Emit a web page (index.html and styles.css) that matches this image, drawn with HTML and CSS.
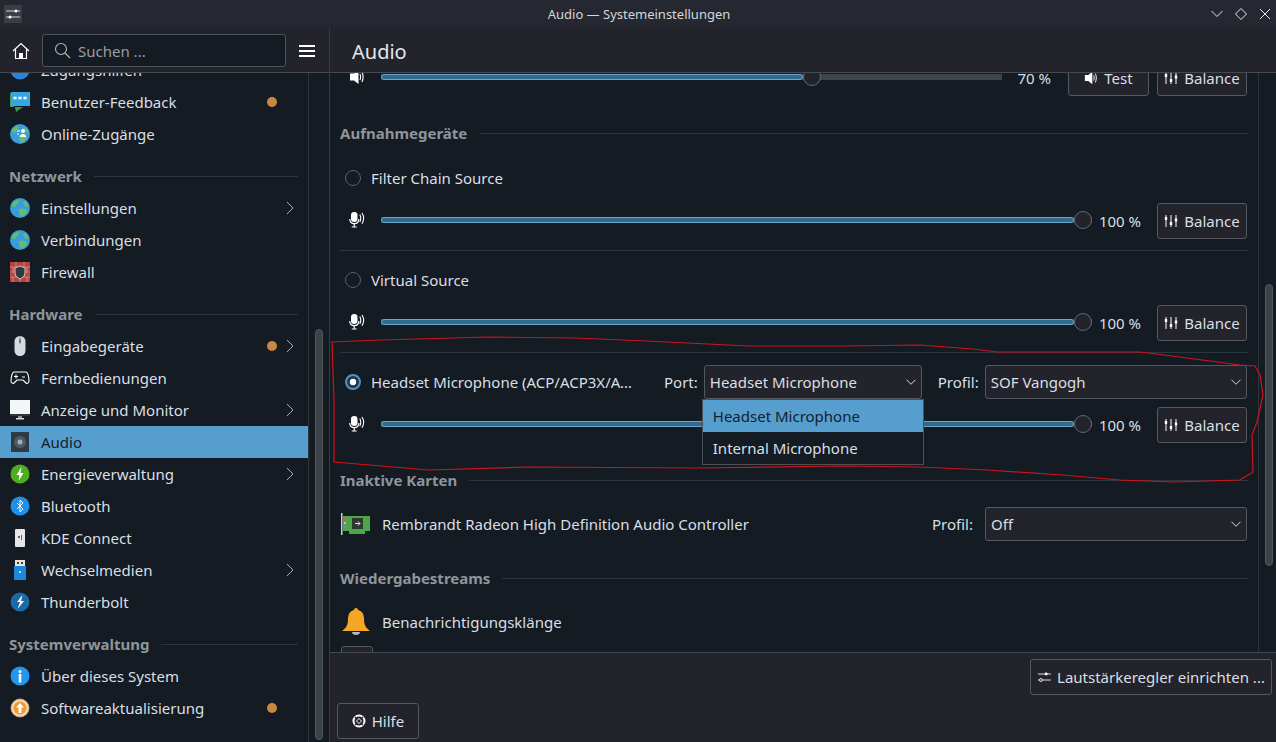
FILE: index.html
```html
<!DOCTYPE html>
<html lang="de">
<head>
    <meta charset="UTF-8">
    <title>Audio — Systemeinstellungen</title>
    <link rel="stylesheet" href="styles.css">
</head>
<body>

<svg class="defs" width="0" height="0">
    <symbol id="chev" viewBox="0 0 10 16"><path d="M2 2l6 6-6 6" fill="none" stroke="#a9aeb3" stroke-width="1"/></symbol>
    <symbol id="chev-down" viewBox="0 0 16 10"><path d="M2 2l6 6 6-6" fill="none" stroke="#d8dde2" stroke-width="1.300"/></symbol>
    <symbol id="mic" viewBox="0 0 16 16">
        <rect x="2" y="0" width="6.500" height="10" rx="3.200" fill="#fff"/>
        <path d="M.7 7c0 3 2 4.700 4.500 4.700S9.800 10 9.800 7M5.200 11.700V14.500M2.700 15h5" fill="none" stroke="#fff" stroke-width="1.200"/>
        <path d="M10.800 2.500c1.200 2.200 1.200 5 0 7.500M13 1c2 3.200 2 7.500 0 10.800" fill="none" stroke="#fff" stroke-width="1.100"/>
    </symbol>
    <symbol id="speaker" viewBox="0 0 16 16">
        <path d="M1 4.500h4L9.500 1v14L5 11.500H1z" fill="#fff"/>
        <path d="M11 5c.8 2 .8 4 0 6M13 3c1.400 3.200 1.400 6.800 0 10" fill="none" stroke="#fff" stroke-width="1.100"/>
    </symbol>
    <symbol id="balance" viewBox="0 0 14 14">
        <path d="M2 1v12M7 1v12M12 1v12" stroke="#fff" stroke-width="1"/>
        <rect x="0.800" y="3" width="2.400" height="3" fill="#fff"/>
        <rect x="5.800" y="8" width="2.400" height="3" fill="#fff"/>
        <rect x="10.800" y="4.500" width="2.400" height="3" fill="#fff"/>
    </symbol>
    <symbol id="globe" viewBox="0 0 20 20">
        <circle cx="10" cy="10" r="10" fill="#3a9bdf"/>
        <path d="M2 6c2-3 5-4 7-4 1 2-1 3-2 4s-1 3-3 3-2-1-2-3zM9 11c3-1 6 0 8 1 0 3-3 6-6 7-1-2-3-5-2-8zM14 3c2 1 4 3 5 6-2 0-4-1-5-2s-1-3 0-4z" fill="#5fbe70"/>
    </symbol>
    <symbol id="prefs" viewBox="0 0 16 14">
        <path d="M1 3.500h15M1 10.500h15" stroke="#fff" stroke-width="1"/>
        <circle cx="10.500" cy="3.500" r="1.700" fill="#fff"/>
        <circle cx="4.500" cy="10.500" r="1.700" fill="#23232c" stroke="#fff"/>
    </symbol>
</svg>

<div class="titlebar">
    <svg class="app-icon" width="22" height="18" viewBox="0 0 22 18">
        <rect x="1" y="0" width="18" height="18" rx="1" fill="#3a3f45"/>
        <path d="M3 6h14M3 12h14" stroke="#c8d4dc" stroke-width="1"/>
        <circle cx="13" cy="6" r="1.500" fill="#fff"/>
        <circle cx="7" cy="12" r="1.500" fill="#fff"/>
    </svg>
    <span class="window-title">Audio — Systemeinstellungen</span>
    <div class="window-buttons">
        <svg width="14" height="14" viewBox="0 0 14 14"><path d="M1.500 4l5.500 5.500L12.500 4" fill="none" stroke="#e6e8ea" stroke-width="1"/></svg>
        <svg width="14" height="14" viewBox="0 0 14 14"><path d="M7 1.500L12.500 7 7 12.500 1.500 7z" fill="none" stroke="#e6e8ea" stroke-width="1"/></svg>
        <svg width="14" height="14" viewBox="0 0 14 14"><path d="M2 2l10 10M12 2L2 12" fill="none" stroke="#e6e8ea" stroke-width="1"/></svg>
    </div>
</div>

<div class="app">
    <aside class="sidebar">
        <div class="side-head">
            <svg width="18" height="18" viewBox="0 0 18 18"><path d="M1 9l8-7.500L17 9M3.500 7.500V16.500h11V7.500" fill="none" stroke="#fff" stroke-width="1.200"/><rect x="7" y="11" width="4" height="5.500" fill="#fff"/></svg>
            <div class="search">
                <svg width="17" height="17" viewBox="0 0 17 17"><circle cx="7" cy="7" r="5.500" fill="none" stroke="#b4b8bc" stroke-width="1.100"/><path d="M11 11l5 5" stroke="#b4b8bc" stroke-width="1.100"/></svg>
                <span>Suchen ...</span>
            </div>
            <div class="burger"><i></i><i></i><i></i></div>
        </div>
        <div class="side-body">
            <nav class="side-list">
                <a class="side-item">
                    <svg class="ico" viewBox="0 0 20 20"><circle cx="10" cy="10" r="9.500" fill="#2c82d8"/></svg>
                    <span>Zugangshilfen</span>
                </a>
                <a class="side-item">
                    <svg class="ico" viewBox="0 0 20 20"><path d="M0 1h4v14H0z" fill="#3f9a4c"/><path d="M5 15h8l-7 5z" fill="#3f9a4c"/><rect x="1" y="0" width="19" height="14" fill="#35a6e4"/><path d="M3.500 6h3M8.500 6h3M13.500 6h3" stroke="#fff" stroke-width="2.500"/></svg>
                    <span>Benutzer-Feedback</span>
                    <i class="dot"></i>
                </a>
                <a class="side-item">
                    <svg class="ico" viewBox="0 0 20 20"><use href="#globe"/><circle cx="13" cy="7" r="2" fill="#fff"/><path d="M10 13c0-2 1-3 3-3s3 1 3 3z" fill="#fff"/><path d="M7 7h3M7 10h2" stroke="#fff" stroke-width="1"/></svg>
                    <span>Online-Zugänge</span>
                </a>

                <h3 class="side-title"><span>Netzwerk</span></h3>
                <a class="side-item">
                    <svg class="ico"><use href="#globe"/></svg>
                    <span>Einstellungen</span>
                    <svg class="chev"><use href="#chev"/></svg>
                </a>
                <a class="side-item">
                    <svg class="ico"><use href="#globe"/></svg>
                    <span>Verbindungen</span>
                </a>
                <a class="side-item">
                    <svg class="ico" viewBox="0 0 20 20"><rect width="20" height="20" fill="#b9433f"/><path d="M0 5h20M0 10h20M0 15h20M6 0v5M14 0v5M3 5v5M10 5v5M17 5v5M6 10v5M14 10v5M3 15v5M10 15v5M17 15v5" stroke="#e08a85" stroke-width=".8"/><path d="M10 4l5 2v5c0 3-3 5-5 6-2-1-5-3-5-6V6z" fill="#33383c" stroke="#c5cacd"/></svg>
                    <span>Firewall</span>
                </a>

                <h3 class="side-title"><span>Hardware</span></h3>
                <a class="side-item">
                    <svg class="ico" viewBox="0 0 20 20"><rect x="4.500" y="0" width="11" height="20" rx="5.500" fill="#d5dade"/><path d="M10 0v8" stroke="#8e969c" stroke-width="1"/><rect x="9" y="3" width="2" height="4" rx="1" fill="#6f787e"/></svg>
                    <span>Eingabegeräte</span>
                    <i class="dot"></i>
                    <svg class="chev"><use href="#chev"/></svg>
                </a>
                <a class="side-item">
                    <svg class="ico" viewBox="0 0 20 20"><path d="M4 4h12c2 0 3 6 3 9 0 2-2 3-3 2l-3-3H7l-3 3c-1 1-3 0-3-2 0-3 1-9 3-9z" fill="none" stroke="#fff" stroke-width="1.100"/><path d="M4 8.500h4M6 6.500v4M12 9h3" stroke="#fff" stroke-width="1"/></svg>
                    <span>Fernbedienungen</span>
                </a>
                <a class="side-item">
                    <svg class="ico" viewBox="0 0 20 20"><rect y="0" width="20" height="14" fill="#f3f6f8"/><rect y="14" width="20" height="2" fill="#30353a"/><rect x="8" y="16" width="4" height="2" fill="#8d9397"/><rect x="6" y="18" width="8" height="1.500" fill="#d6dadd"/></svg>
                    <span>Anzeige und Monitor</span>
                    <svg class="chev"><use href="#chev"/></svg>
                </a>
                <a class="side-item active">
                    <svg class="ico" viewBox="0 0 20 20"><rect x="1" y="0" width="18" height="20" fill="#2f3a44"/><circle cx="10" cy="10" r="6" fill="#4c5a64"/><circle cx="10" cy="10" r="2.500" fill="#a4aeb4"/></svg>
                    <span>Audio</span>
                </a>
                <a class="side-item">
                    <svg class="ico" viewBox="0 0 20 20"><circle cx="10" cy="10" r="9.500" fill="#4fae1f"/><path d="M11.500 3L6.500 11h3l-1 6 5-8h-3z" fill="#fff"/></svg>
                    <span>Energieverwaltung</span>
                    <svg class="chev"><use href="#chev"/></svg>
                </a>
                <a class="side-item">
                    <svg class="ico" viewBox="0 0 20 20"><circle cx="10" cy="10" r="9.500" fill="#1f8fe8"/><path d="M7 7l6 6-3 3V4l3 3-6 6" fill="none" stroke="#fff" stroke-width="1"/></svg>
                    <span>Bluetooth</span>
                </a>
                <a class="side-item">
                    <svg class="ico" viewBox="0 0 20 20"><rect x="5" y="1" width="10" height="18" rx="1" fill="#e4e6e8"/><path d="M8 8h2v2H8zM11 7h1v5h-1z" fill="#596066"/></svg>
                    <span>KDE Connect</span>
                </a>
                <a class="side-item">
                    <svg class="ico" viewBox="0 0 20 20"><rect x="5" y="0" width="10" height="6" fill="#e9e5d6"/><path d="M7 2h2v2H7zM11 2h2v2h-2z" fill="#3b3f42"/><rect x="4" y="6" width="12" height="14" fill="#1d87dd"/><path d="M9 11h2v2H9z" fill="#bde0f8"/></svg>
                    <span>Wechselmedien</span>
                    <svg class="chev"><use href="#chev"/></svg>
                </a>
                <a class="side-item">
                    <svg class="ico" viewBox="0 0 20 20"><circle cx="10" cy="10" r="9.500" fill="#1a6aa5"/><path d="M12.500 3L7 10h3l-2.500 7L14 9h-3z" fill="#fff"/></svg>
                    <span>Thunderbolt</span>
                </a>

                <h3 class="side-title"><span>Systemverwaltung</span></h3>
                <a class="side-item">
                    <svg class="ico" viewBox="0 0 20 20"><circle cx="10" cy="10" r="9.500" fill="#2196ee"/><circle cx="10" cy="5.500" r="1.500" fill="#fff"/><rect x="8.700" y="8" width="2.600" height="8.500" fill="#fff"/></svg>
                    <span>Über dieses System</span>
                </a>
                <a class="side-item">
                    <svg class="ico" viewBox="0 0 20 20"><circle cx="10" cy="10" r="9" fill="#f2d9b8" stroke="#c9a27a"/><circle cx="10" cy="10" r="6.500" fill="#ee9a2e"/><path d="M10 5l4 4.500h-2.500V15h-3V9.500H6z" fill="#fff"/></svg>
                    <span>Softwareaktualisierung</span>
                    <i class="dot"></i>
                </a>
            </nav>
        </div>
        <div class="side-scroll"><div class="thumb"></div></div>
    </aside>

    <main class="main">
        <h1 class="page-title">Audio</h1>
        <div class="page-body">
            <div class="content">
                <div class="device first">
                    <div class="dev-line">
                        <svg class="vol"><use href="#speaker"/></svg>
                        <div class="slider"><div class="rail"><div class="fill" style="width:70%"></div><div class="knob" style="left:70%"></div></div></div>
                        <span class="pct">70 %</span>
                        <button class="btn test"><svg width="14" height="14"><use href="#speaker"/></svg>Test</button>
                        <button class="btn bal"><svg width="14" height="14"><use href="#balance"/></svg>Balance</button>
                    </div>
                </div>

                <h2 class="sec-title"><span>Aufnahmegeräte</span></h2>
                <div class="device">
                    <div class="dev-head">
                        <i class="radio"></i>
                        <span class="dev-name">Filter Chain Source</span>
                    </div>
                    <div class="dev-line">
                        <svg class="vol"><use href="#mic"/></svg>
                        <div class="slider"><div class="rail"><div class="fill" style="width:100%"></div><div class="knob" style="left:100%"></div></div></div>
                        <span class="pct">100 %</span>
                        <button class="btn bal"><svg width="14" height="14"><use href="#balance"/></svg>Balance</button>
                    </div>
                </div>
                <div class="device sep">
                    <div class="dev-head">
                        <i class="radio"></i>
                        <span class="dev-name">Virtual Source</span>
                    </div>
                    <div class="dev-line">
                        <svg class="vol"><use href="#mic"/></svg>
                        <div class="slider"><div class="rail"><div class="fill" style="width:100%"></div><div class="knob" style="left:100%"></div></div></div>
                        <span class="pct">100 %</span>
                        <button class="btn bal"><svg width="14" height="14"><use href="#balance"/></svg>Balance</button>
                    </div>
                </div>
                <div class="device sep">
                    <div class="dev-head">
                        <i class="radio on"></i>
                        <span class="dev-name cut">Headset Microphone (ACP/ACP3X/ACP6x Audio Coprocessor)</span>
                        <label class="lab port-lab">Port:</label>
                        <div class="combo port">
                            <span>Headset Microphone</span>
                            <svg width="12" height="8"><use href="#chev-down"/></svg>
                            <ul class="popup">
                                <li class="sel">Headset Microphone</li>
                                <li>Internal Microphone</li>
                            </ul>
                        </div>
                        <label class="lab prof-lab">Profil:</label>
                        <div class="combo prof">
                            <span>SOF Vangogh</span>
                            <svg width="12" height="8"><use href="#chev-down"/></svg>
                        </div>
                    </div>
                    <div class="dev-line">
                        <svg class="vol"><use href="#mic"/></svg>
                        <div class="slider"><div class="rail"><div class="fill" style="width:100%"></div><div class="knob" style="left:100%"></div></div></div>
                        <span class="pct">100 %</span>
                        <button class="btn bal"><svg width="14" height="14"><use href="#balance"/></svg>Balance</button>
                    </div>
                </div>

                <h2 class="sec-title"><span>Inaktive Karten</span></h2>
                <div class="card">
                    <svg class="card-ico" width="30" height="22" viewBox="0 0 30 22">
                        <rect x="2" y="3" width="27" height="15" fill="#4fa64a"/>
                        <rect x="8" y="18" width="16" height="3" fill="#4fa64a"/>
                        <rect x="0" y="0" width="1.500" height="22" fill="#c8cdd0"/>
                        <path d="M3 5h2v2H3z" fill="#e05a5a"/><path d="M3 9h2v2H3z" fill="#e8c040"/><path d="M3 13h2v2H3z" fill="#4a9ae0"/>
                        <rect x="11" y="5" width="11" height="11" fill="#2c3a30"/>
                        <path d="M14 10.500h5M17 8.500l2 2-2 2" fill="none" stroke="#dfe5e0" stroke-width="1"/>
                    </svg>
                    <span class="card-name">Rembrandt Radeon High Definition Audio Controller</span>
                    <label class="lab">Profil:</label>
                    <div class="combo prof wide-gap">
                        <span>Off</span>
                        <svg width="12" height="8"><use href="#chev-down"/></svg>
                    </div>
                </div>

                <h2 class="sec-title"><span>Wiedergabestreams</span></h2>
                <div class="stream">
                    <svg class="card-ico" width="30" height="30" viewBox="0 0 30 30">
                        <path d="M15 1c1.500 0 2 1 2 2 4 1 6 4 6 9 0 6 2 9 6 12H1c4-3 6-6 6-12 0-5 2-8 6-9 0-1 .500-2 2-2z" fill="#f5a623"/>
                        <path d="M11 25h8c0 2-2 3-4 3s-4-1-4-3z" fill="#b8bcbf"/>
                    </svg>
                    <span class="card-name">Benachrichtigungsklänge</span>
                </div>
                <div class="stub"></div>
            </div>
            <div class="main-scroll"><div class="thumb"></div></div>
        </div>
        <footer class="foot">
            <button class="btn setup"><svg width="14" height="12"><use href="#prefs"/></svg>Lautstärkeregler einrichten ...</button>
            <button class="btn help">
                <svg width="14" height="14" viewBox="0 0 14 14"><circle cx="7" cy="7" r="5.500" fill="none" stroke="#fff" stroke-width="2"/><circle cx="7" cy="7" r="2.200" fill="#23232c" stroke="#fff"/><path d="M3 3l2.500 2.500M11 3L8.500 5.500M3 11l2.500-2.500M11 11L8.500 8.500" stroke="#23232c" stroke-width="1.200"/></svg>
                Hilfe
            </button>
        </footer>
    </main>
</div>

<!-- hand-drawn red marker on top of the window -->
<svg class="scribble" width="1276" height="742" viewBox="0 0 1276 742">
    <path d="M332 342L381 340 488 337 575 338 646 341 749 346 844 346 920 345 973 349 997 352 1140 352 1187 358 1240 365 1255 366 1260 375 1263 395 1257 422 1252 435 1253 472 1240 480 1173 482 1120 480 1063 475 987 470 920 467 844 466 700 468 528 467 429 470 334 462 334 400z" fill="none" stroke="#d0141c" stroke-width="1.200"/>
</svg>

</body>
</html>
```

FILE: styles.css
```css
* {
    box-sizing: border-box;
}
html, body {
    margin: 0;
    height: 742px;
    overflow: hidden;
}
body {
    font-family: "Noto Sans", sans-serif;
    font-size: 15px;
    color: #dadfe3;
    background-color: #141b23;
    position: relative;
}
.defs {
    position: absolute;
}

/* window title */
.titlebar {
    height: 28px;
    background-color: #252830;
    display: flex;
    align-items: center;
    justify-content: center;
    padding-left: 2px;
    position: relative;
    font-size: 13px;
    color: #d4d7db;
}
.app-icon {
    position: absolute;
    left: 3px;
    top: 5px;
}
.window-buttons {
    position: absolute;
    right: 4px;
    top: 7px;
    display: flex;
    gap: 10px;
}

.app {
    display: flex;
    height: 714px;
}

/* sidebar */
.sidebar {
    width: 330px;
    flex: none;
    display: grid;
    grid-template-columns: 309px 20px;
    grid-template-rows: 45px 1fr;
    border-right: 1px solid #383b45;
    position: relative;
}
.side-head {
    grid-column: 1 / 3;
    background-color: #23232c;
    border-bottom: 1px solid #454950;
    display: flex;
    align-items: center;
    padding: 1px 13px 0 12px;
    z-index: 1;
}
.search {
    width: 244px;
    height: 33px;
    margin-left: 12px;
    margin-right: 13px;
    background-color: #141b23;
    border: 1px solid #51555b;
    border-radius: 3px;
    display: flex;
    align-items: center;
    gap: 7px;
    padding-left: 11px;
    color: #989ea3;
}
.burger {
    width: 16px;
    display: flex;
    flex-direction: column;
    gap: 3px;
}
.burger i {
    height: 2px;
    background-color: #fff;
}
.side-body {
    overflow: hidden;
    border-right: 1px solid #2d343b;
}
.side-list {
    margin-top: -19px;
}
.side-item {
    height: 32px;
    display: flex;
    align-items: center;
    padding: 0 13px 0 10px;
}
.side-item span {
    flex: 1;
    margin-left: 11px;
}
.side-item .ico {
    width: 20px;
    height: 20px;
    flex: none;
}
.side-item.active {
    background-color: #569ecd;
    color: #14212e;
}
.dot {
    width: 10px;
    height: 10px;
    border-radius: 50%;
    background-color: #c9873f;
}
.chev {
    width: 10px;
    height: 16px;
    margin-left: 8px;
}
.side-item > .dot:last-child {
    margin-right: 18px;
}
.side-title {
    margin: 0;
    height: 42px;
    padding: 16px 10px 0 9px;
    font-size: 15px;
    font-weight: 700;
    color: #8f959b;
    display: flex;
    align-items: flex-start;
    line-height: 20px;
}
.side-title span, .sec-title span {
    white-space: nowrap;
}
.side-title::after, .sec-title::after {
    content: "";
    flex: 1;
    height: 1px;
    background-color: #2b363e;
    margin-left: 12px;
    margin-top: 10px;
}
.side-scroll {
    padding: 256px 0 0 6px;
}
.thumb {
    width: 8px;
    background-color: #3b4347;
    border: 1px solid #505659;
    border-radius: 4px;
}
.side-scroll .thumb {
    height: 411px;
}

/* main column */
.main {
    flex: 1;
    display: flex;
    flex-direction: column;
    min-width: 0;
}
.page-title {
    margin: 0;
    height: 45px;
    flex: none;
    background-color: #23232c;
    border-bottom: 1px solid #454950;
    font-size: 20px;
    font-weight: 400;
    color: #e3e6e9;
    padding: 10px 0 0 22px;
    line-height: 28px;
    z-index: 1;
}
.page-body {
    flex: 1;
    display: flex;
    overflow: hidden;
}
.content {
    width: 929px;
    flex: none;
    border-right: 1px solid #2d343b;
    padding: 0 10px;
    margin-top: -13px;
}
.main-scroll {
    padding: 211px 0 0 6px;
}
.main-scroll .thumb {
    height: 282px;
}

.sec-title {
    margin: 16px 0 0;
    height: 20px;
    font-size: 15px;
    font-weight: 700;
    color: #8f959b;
    display: flex;
    line-height: 20px;
}
.device {
    padding-bottom: 11px;
}
.device.sep {
    border-top: 1px solid #2b363e;
    padding-top: 12px;
}
.sec-title + .device {
    padding-top: 18px;
}
.dev-head {
    height: 34px;
    display: flex;
    align-items: center;
    padding-left: 5px;
}
.dev-line {
    height: 36px;
    margin-top: 8px;
    display: flex;
    align-items: center;
    padding-left: 9px;
    padding-right: 1px;
}
.device.first .dev-line {
    margin-top: 0;
}
.radio {
    width: 16px;
    height: 16px;
    flex: none;
    border-radius: 50%;
    border: 1px solid #5d6166;
    background-color: #141b23;
}
.radio.on {
    border: 2px solid #4f93bf;
    background: radial-gradient(circle, #fff 0 3px, #1f3a4f 3.6px);
}
.dev-name {
    margin-left: 10px;
}
.dev-name.cut {
    width: 262px;
    white-space: nowrap;
    overflow: hidden;
    text-overflow: ellipsis;
    flex: none;
}
.lab {
    white-space: nowrap;
}
.port-lab {
    margin-left: 31px;
}
.prof-lab {
    margin-left: 16px;
}
.combo {
    height: 34px;
    margin-left: 6px;
    background-color: #23232c;
    border: 1px solid #55585f;
    border-radius: 3px;
    display: flex;
    align-items: center;
    justify-content: space-between;
    padding: 0 4px 0 5px;
    position: relative;
    flex: none;
}
.combo.port {
    width: 218px;
}
.combo.prof {
    width: 262px;
    margin-right: 1px;
}
.combo.wide-gap {
    margin-left: 12px;
}
.popup {
    position: absolute;
    left: -3px;
    top: 33px;
    width: 222px;
    margin: 0;
    padding: 0;
    list-style: none;
    background-color: #141b23;
    border: 1px solid #4d5157;
    z-index: 2;
}
.popup li {
    height: 32px;
    line-height: 32px;
    padding-left: 10px;
}
.popup li.sel {
    background-color: #569ecd;
    color: #14212e;
}

.vol {
    width: 16px;
    height: 16px;
    flex: none;
    margin-top: -3px;
}
.slider {
    flex: 1;
    margin-left: 16px;
    height: 18px;
    margin-top: -3px;
    position: relative;
    background: linear-gradient(#3c4649, #3c4649) center / 100% 6px no-repeat;
    border-radius: 3px;
}
.rail {
    position: absolute;
    left: 9px;
    right: 9px;
    top: 0;
    bottom: 0;
}
.fill {
    position: absolute;
    left: -9px;
    top: 6px;
    height: 6px;
    background-color: #33698c;
    border: 1px solid #6aa5cb;
    border-radius: 3px;
}
.knob {
    position: absolute;
    top: 0;
    width: 18px;
    height: 18px;
    margin-left: -9px;
    background-color: #23232c;
    border: 1px solid #64686d;
    border-radius: 50%;
}
.pct {
    width: 49px;
    flex: none;
    text-align: right;
    white-space: nowrap;
}
.btn {
    height: 36px;
    font: inherit;
    color: inherit;
    background-color: #23232c;
    border: 1px solid #55585f;
    border-radius: 3px;
    display: flex;
    align-items: center;
    justify-content: center;
    gap: 6px;
    padding: 0;
    flex: none;
}
.btn.test {
    width: 81px;
    margin-left: 17px;
}
.btn.bal {
    width: 90px;
    margin-left: 16px;
}
.btn.test + .btn.bal {
    margin-left: 8px;
}

.card {
    display: flex;
    align-items: center;
    height: 34px;
    margin-top: 17px;
    margin-bottom: 27px;
}
.card-ico {
    flex: none;
    margin-left: 1px;
}
.card-name {
    flex: 1;
    margin-left: 11px;
}
.stream {
    display: flex;
    align-items: center;
    height: 34px;
    margin-top: 17px;
}
.stub {
    width: 32px;
    height: 20px;
    margin-top: 7px;
    margin-left: 1px;
    background-color: #23232c;
    border: 1px solid #55585f;
    border-radius: 3px;
}

/* footer */
.foot {
    height: 90px;
    flex: none;
    background-color: #23232c;
    border-top: 1px solid #454950;
    padding: 6px 4px 3px 7px;
    display: flex;
    flex-direction: column;
    justify-content: space-between;
    z-index: 1;
}
.btn.setup {
    width: 242px;
    align-self: flex-end;
}
.btn.help {
    width: 82px;
}

.scribble {
    position: absolute;
    left: 0;
    top: 0;
    pointer-events: none;
    z-index: 5;
}
```
